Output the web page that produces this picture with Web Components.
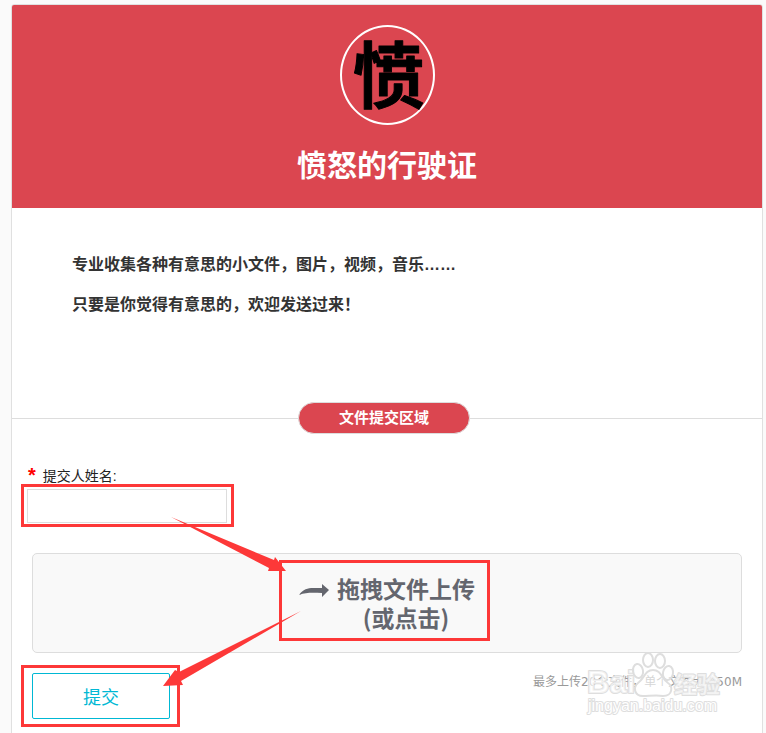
<!DOCTYPE html>
<html lang="zh-CN">
<head>
<meta charset="UTF-8">
<meta name="viewport" content="width=device-width, initial-scale=1">
<title>愤怒的行驶证</title>
<style>
    body {
        margin: 0;
        padding: 5px 4px 0 12px;
        background: #fafafa;
        color: #333;
        font-family: "Liberation Sans", "Noto Sans CJK SC", sans-serif;
        font-size: 16px;
    }
    intro-text p {
        margin: 0;
        line-height: 40px;
    }
</style>
</head>
<body>
<collect-card>
    <collect-header slot="header">愤怒的行驶证</collect-header>
    <intro-text>
        <p>专业收集各种有意思的小文件，图片，视频，音乐……</p>
        <p>只要是你觉得有意思的，欢迎发送过来！</p>
    </intro-text>
    <section-divider>文件提交区域</section-divider>
    <upload-form></upload-form>
    <guide-arrows slot="overlay"></guide-arrows>
    <site-watermark slot="overlay"></site-watermark>
</collect-card>

<script>
class CollectCard extends HTMLElement {
    constructor() {
        super();
        this.attachShadow({ mode: 'open' });
    }

    connectedCallback() {
        this.shadowRoot.innerHTML = `
            <style>
                :host {
                    display: block;
                    position: relative;
                    box-sizing: border-box;
                    min-height: calc(100vh - 5px);
                    background: #fff;
                    border-radius: 3px 3px 0 0;
                    box-shadow: 0 0 0 1px #e0e0e0;
                }
            </style>
            <slot name="header"></slot>
            <slot></slot>
            <slot name="overlay"></slot>
        `;
    }
}

class CollectHeader extends HTMLElement {
    constructor() {
        super();
        this.attachShadow({ mode: 'open' });
    }

    connectedCallback() {
        this.shadowRoot.innerHTML = `
            <style>
                :host {
                    display: flex;
                    flex-direction: column;
                    align-items: center;
                    gap: 20px;
                    padding: 20px 0 21px;
                    background: #db4650;
                    border-radius: 2px 2px 0 0;
                    color: #fff;
                }
                .avatar {
                    box-sizing: border-box;
                    width: 95px;
                    height: 100px;
                    border: 2px solid #fff;
                    border-radius: 50%;
                }
                svg {
                    display: block;
                    overflow: visible;
                }
                h1 {
                    margin: 0;
                    font-size: 30px;
                    line-height: 42px;
                }
            </style>
            <div class="avatar">
                <svg width="91" height="96" viewBox="0 0 91 96">
                    <text x="47" y="75" text-anchor="middle" font-size="72" font-weight="bold"
                        font-family="Noto Sans CJK SC, sans-serif" stroke="#000" stroke-width="1"
                        stroke-linejoin="round">愤</text>
                </svg>
            </div>
            <h1><slot></slot></h1>
        `;
    }
}

class IntroText extends HTMLElement {
    constructor() {
        super();
        this.attachShadow({ mode: 'open' });
    }

    connectedCallback() {
        this.shadowRoot.innerHTML = `
            <style>
                :host {
                    display: block;
                    padding: 37px 60px 77px;
                    font-weight: bold;
                }
            </style>
            <slot></slot>
        `;
    }
}

class SectionDivider extends HTMLElement {
    constructor() {
        super();
        this.attachShadow({ mode: 'open' });
    }

    connectedCallback() {
        this.shadowRoot.innerHTML = `
            <style>
                :host {
                    display: flex;
                    align-items: center;
                }
                :host::before,
                :host::after {
                    content: "";
                    flex: 49;
                    height: 1px;
                    background: #ddd;
                }
                :host::after {
                    flex: 50;
                }
                h2 {
                    box-sizing: border-box;
                    width: 172px;
                    margin: 0;
                    border: 1px solid #ddd;
                    border-radius: 16px;
                    background: #db4650;
                    color: #fff;
                    font-size: 15px;
                    line-height: 30px;
                    text-align: center;
                }
            </style>
            <h2><slot></slot></h2>
        `;
    }
}

// Red frame drawn around whatever is slotted in
class FocusFrame extends HTMLElement {
    constructor() {
        super();
        this.attachShadow({ mode: 'open' });
    }

    connectedCallback() {
        this.shadowRoot.innerHTML = `
            <style>
                :host {
                    display: block;
                    position: relative;
                    width: fit-content;
                }
                :host::after {
                    content: "";
                    position: absolute;
                    inset: var(--frame-inset, -6px);
                    border: 3px solid #fd3838;
                    pointer-events: none;
                }
            </style>
            <slot></slot>
        `;
    }
}

class UploadForm extends HTMLElement {
    constructor() {
        super();
        this.attachShadow({ mode: 'open' });
    }

    connectedCallback() {
        this.shadowRoot.innerHTML = `
            <style>
                :host {
                    display: block;
                    padding: 31px 20px 12px;
                }
                form {
                    display: flex;
                    flex-direction: column;
                }
                .field {
                    margin: 0 -5px 30px;
                }
                .name {
                    display: flex;
                    gap: 7px;
                    margin-bottom: 2px;
                    padding-left: 1px;
                    color: #222;
                    font-size: 14px;
                    line-height: 22px;
                }
                .required {
                    color: #f00;
                    font-size: 20px;
                    font-weight: bold;
                    line-height: 20px;
                }
                .field focus-frame {
                    --frame-inset: -5px -7px -4px -6px;
                }
                .field input {
                    display: block;
                    box-sizing: border-box;
                    width: 200px;
                    height: 34px;
                    padding: 0 8px;
                    border: 1px solid #ddd;
                    background: #fff;
                    font: inherit;
                    outline: none;
                }
                .drop {
                    display: flex;
                    justify-content: center;
                    align-items: center;
                    box-sizing: border-box;
                    min-height: 100px;
                    margin-bottom: 20px;
                    border: 1px solid #ddd;
                    border-radius: 5px;
                    background: #f9f9f9;
                    cursor: pointer;
                }
                .drop focus-frame {
                    --frame-inset: -14px -15px -9px -20px;
                }
                .drop-text {
                    display: flex;
                    gap: 8px;
                    color: #64666e;
                    font-family: "Noto Sans CJK SC", sans-serif;
                    font-size: 23px;
                    font-weight: bold;
                    line-height: 29px;
                    text-align: center;
                }
                .drop input {
                    position: absolute;
                    width: 1px;
                    height: 1px;
                    opacity: 0;
                }
                .actions {
                    display: flex;
                    justify-content: space-between;
                    align-items: flex-start;
                }
                .actions focus-frame {
                    --frame-inset: -8px -10px -8px -11px;
                }
                button {
                    display: block;
                    width: 138px;
                    height: 46px;
                    padding: 0;
                    border: 1px solid #00b8d4;
                    border-radius: 2px;
                    background: #fff;
                    color: #00b8d4;
                    font-family: inherit;
                    font-size: 18px;
                    cursor: pointer;
                }
                .hint {
                    margin: 0;
                    color: #999;
                    font-family: "DejaVu Sans", "Noto Sans CJK SC", sans-serif;
                    font-size: 12px;
                    line-height: 18px;
                }
            </style>
            <form>
                <div class="field">
                    <label class="name" for="name"><span class="required">*</span><span>提交人姓名:</span></label>
                    <focus-frame><input type="text" id="name" name="name" required></focus-frame>
                </div>
                <label class="drop">
                    <focus-frame>
                        <span class="drop-text">
                            <svg width="30" height="30" viewBox="0 0 30 30">
                                <path d="M0 21C4 15 9 14 14 14H23V10L30 16L23 23V19C15 19 8 18 0 21Z" fill="#64666e"/>
                            </svg>
                            <span>拖拽文件上传<br>(或点击)</span>
                        </span>
                        <input type="file" name="files" multiple>
                    </focus-frame>
                </label>
                <div class="actions">
                    <focus-frame><button type="button">提交</button></focus-frame>
                    <p class="hint">最多上传20个文件，单个文件大小50M</p>
                </div>
            </form>
        `;
    }
}

// Arrows leading from the name field to the drop area to the submit button
class GuideArrows extends HTMLElement {
    constructor() {
        super();
        this.attachShadow({ mode: 'open' });
    }

    connectedCallback() {
        this.shadowRoot.innerHTML = `
            <style>
                :host {
                    position: absolute;
                    top: 510px;
                    left: 149px;
                    pointer-events: none;
                }
                svg {
                    display: block;
                }
            </style>
            <svg width="142" height="174" viewBox="0 0 142 174" fill="#fd3838">
                <path d="M10 2L113 45L114 42L125 56L107 56L108 53Z"/>
                <path d="M140 96L18 157L14 155L2 171L22 170L20 166Z"/>
            </svg>
        `;
    }
}

class SiteWatermark extends HTMLElement {
    constructor() {
        super();
        this.attachShadow({ mode: 'open' });
    }

    connectedCallback() {
        this.shadowRoot.innerHTML = `
            <style>
                :host {
                    position: absolute;
                    top: 643px;
                    right: 36px;
                    pointer-events: none;
                }
                svg {
                    display: block;
                    overflow: visible;
                }
                text {
                    font-family: "Liberation Sans", "Noto Sans CJK SC", sans-serif;
                    paint-order: stroke;
                }
            </style>
            <svg width="142" height="74" viewBox="0 0 142 74" fill="#fff" fill-opacity="0.6" stroke="#dedede" stroke-width="2" stroke-linejoin="round">
                <text x="3" y="45" font-size="31" font-weight="bold">Bai</text>
                <text x="90" y="45" font-size="23" font-weight="bold">经验</text>
                <ellipse cx="54" cy="23" rx="5" ry="7" transform="rotate(-10 54 23)"/>
                <ellipse cx="64" cy="12" rx="5" ry="7"/>
                <ellipse cx="76" cy="13" rx="5" ry="7"/>
                <ellipse cx="84" cy="25" rx="5" ry="7" transform="rotate(10 84 25)"/>
                <path d="M69 22C61 22 60 31 54 35C49 39 50 48 59 48C65 48 73 47 79 48C89 48 89 38 84 35C78 31 77 22 69 22Z"/>
                <text x="4" y="63" font-size="16" fill-opacity="1">jingyan.baidu.com</text>
            </svg>
        `;
    }
}

customElements.define('collect-card', CollectCard);
customElements.define('collect-header', CollectHeader);
customElements.define('intro-text', IntroText);
customElements.define('section-divider', SectionDivider);
customElements.define('focus-frame', FocusFrame);
customElements.define('upload-form', UploadForm);
customElements.define('guide-arrows', GuideArrows);
customElements.define('site-watermark', SiteWatermark);
</script>
</body>
</html>
